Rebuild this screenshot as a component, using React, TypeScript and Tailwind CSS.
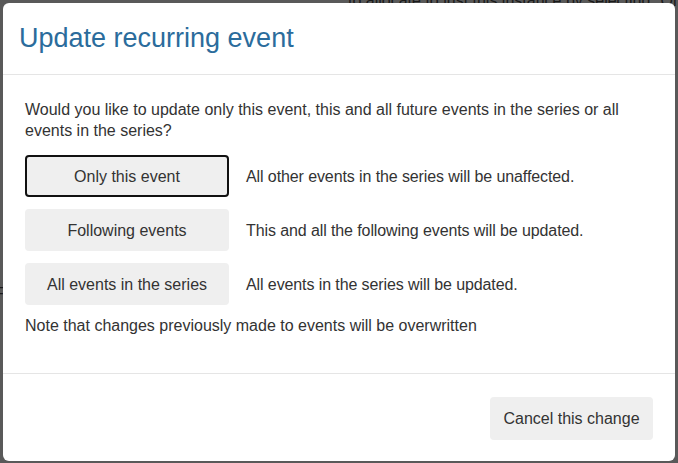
import React from 'react';

const options = [
  { label: 'Only this event', note: 'All other events in the series will be unaffected.', focused: true },
  { label: 'Following events', note: 'This and all the following events will be updated.' },
  { label: 'All events in the series', note: 'All events in the series will be updated.' },
];

export default function App() {
  return (
    <div
      className="relative w-[678px] h-[463px] overflow-hidden bg-[#595959] text-[#1e1e1e]"
      style={{ fontFamily: '"Liberation Sans", Arial, sans-serif' }}
    >
      {/* page behind the overlay */}
      <div className="absolute left-[348px] top-[-11px] text-[16px] whitespace-nowrap text-[#1a1a1a]">
        to allocate to just this instance by selecting "Only this event" when saving
      </div>
      <div className="absolute left-[-6px] top-[282px] text-[16px] text-[#1a1a1a]">F</div>

      {/* dialog */}
      <div className="absolute left-[3px] top-[3px] w-[672px] h-[458px] bg-white rounded-[6px] flex flex-col">
        <div className="h-[72px] shrink-0 border-b border-[#e5e5e5] pt-[20px] pl-[16px]">
          <h2 className="text-[27px] leading-[30px] text-[#2b6c9c]">Update recurring event</h2>
        </div>

        <div className="flex-1 pt-[24px] px-[22px] text-[16px] leading-[21px] text-[#333]">
          <p>
            Would you like to update only this event, this and all future events in the series or all
            events in the series?
          </p>
          <div className="mt-[14px] flex flex-col gap-[12px]">
            {options.map((o) => (
              <div key={o.label} className="flex items-center gap-[17px]">
                <button
                  className={`w-[204px] h-[42px] shrink-0 rounded-[4px] bg-[#efefef] text-[#333] ${
                    o.focused ? 'border-2 border-[#111]' : ''
                  }`}
                >
                  {o.label}
                </button>
                <span className="tracking-[-0.1px]">{o.note}</span>
              </div>
            ))}
          </div>
          <p className="mt-[10px]">Note that changes previously made to events will be overwritten</p>
        </div>

        <div className="h-[88px] shrink-0 border-t border-[#e5e5e5] flex justify-end items-start pt-[23px] pr-[22px]">
          <button className="w-[163px] h-[43px] rounded-[4px] bg-[#efefef] text-[16px] text-[#333]">
            Cancel this change
          </button>
        </div>
      </div>
    </div>
  );
}
